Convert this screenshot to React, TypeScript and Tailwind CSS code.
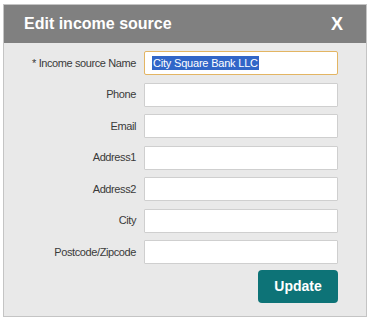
export default function App() {
  const rows = ["Phone", "Email", "Address1", "Address2", "City", "Postcode/Zipcode"];
  return (
    <div className="w-[371px] h-[321px] bg-white pt-[4px] pl-[3px]" style={{ fontFamily: '"Liberation Sans", Arial, sans-serif' }}>
      <div className="w-[364px] h-[313px] border border-[#c4c4c4] bg-[#e9e9e9] flex flex-col">
        <div className="h-[38px] bg-[#808080] flex items-center justify-between pl-[20px] pr-[23px] shrink-0">
          <span className="text-white font-bold text-[16px] leading-none">Edit income source</span>
          <span className="text-white font-bold text-[18px] leading-none">X</span>
        </div>
        <div className="flex flex-col pt-[8px] pr-[28px]">
          <div className="flex items-center h-[24px]">
            <div className="w-[132px] text-right text-[11px] tracking-[-0.4px] text-[#3a3a3a]">* Income source Name</div>
            <div className="ml-[8px] w-[194px] h-[24px] bg-white border border-[#e3b563] rounded-[2px] flex items-center pl-[7px]">
              <span className="bg-[#3166c8] text-white text-[11px] tracking-[-0.2px] leading-[14px] px-[1px]">City Square Bank LLC</span>
            </div>
          </div>
          {rows.map((r) => (
            <div key={r} className="flex items-center h-[24px] mt-[7.5px]">
              <div className="w-[132px] text-right text-[11px] tracking-[-0.4px] text-[#3a3a3a]">{r}</div>
              <div className="ml-[8px] w-[194px] h-[24px] bg-white border border-[#cfcfcf] rounded-[1px]" />
            </div>
          ))}
          <div className="flex justify-end mt-[6px]">
            <div className="w-[80px] h-[33px] bg-[#0d7377] rounded-[4px] flex items-center justify-center text-white font-bold text-[14px]">
              Update
            </div>
          </div>
        </div>
      </div>
    </div>
  );
}
